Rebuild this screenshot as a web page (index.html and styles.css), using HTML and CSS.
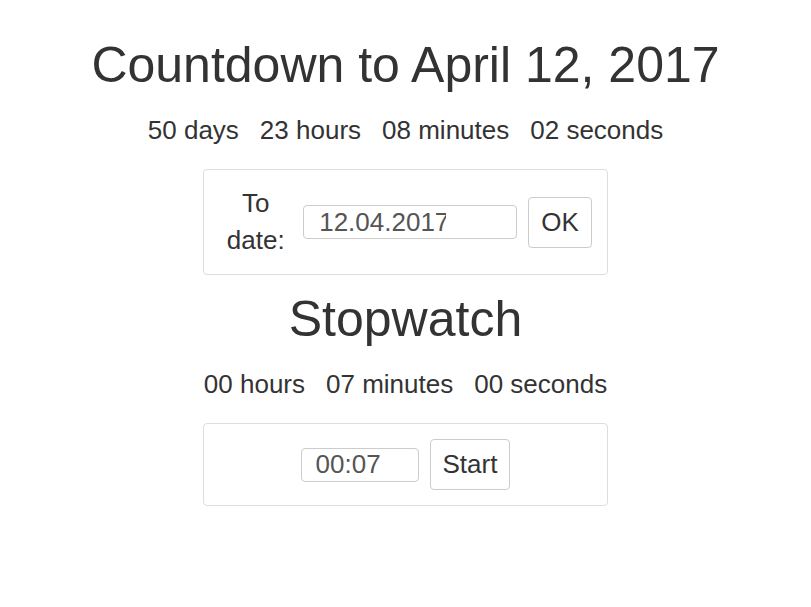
FILE: index.html
```html
<!DOCTYPE html>
<html lang="en">
<head>
<meta charset="utf-8">
<title>Countdown</title>
<link rel="stylesheet" href="styles.css">
</head>
<body>
<main class="page">
  <h1 class="title">Countdown to April 12, 2017</h1>
  <div class="units">
    <span>50 days</span>
    <span>23 hours</span>
    <span>08 minutes</span>
    <span>02 seconds</span>
  </div>
  <form class="panel panel-date">
    <label class="date-label" for="date">To date:</label>
    <input class="field field-date" id="date" type="text" value="12.04.2017">
    <button class="btn" type="button">OK</button>
  </form>

  <h1 class="title title-second">Stopwatch</h1>
  <div class="units">
    <span>00 hours</span>
    <span>07 minutes</span>
    <span>00 seconds</span>
  </div>
  <form class="panel">
    <input class="field field-time" type="text" value="00:07">
    <button class="btn" type="button">Start</button>
  </form>
</main>
</body>
</html>
```

FILE: styles.css
```css
html, body {
  margin: 0;
  padding: 0;
  background: #ffffff;
}

body {
  font-family: "Liberation Sans", Arial, Helvetica, sans-serif;
  color: #333333;
}

.page {
  display: flex;
  flex-direction: column;
  align-items: center;
  padding-top: 38px;
}

.title {
  margin: 0;
  font-size: 50px;
  font-weight: 400;
  line-height: 55px;
  text-align: center;
}

.title-second {
  margin-top: 17px;
}

.units {
  display: flex;
  justify-content: center;
  gap: 21px;
  margin-top: 18px;
  font-size: 26px;
  line-height: 38px;
  white-space: nowrap;
}

.panel {
  box-sizing: border-box;
  width: 405px;
  margin: 20px 0 0;
  padding: 15px;
  border: 1px solid #dddddd;
  border-radius: 4px;
  display: flex;
  align-items: center;
  justify-content: center;
  gap: 11px;
}

.date-label {
  width: 73px;
  font-size: 26px;
  line-height: 37px;
  text-align: center;
}

.field {
  box-sizing: border-box;
  height: 34px;
  margin: 0;
  padding: 0 12px;
  border: 1px solid #cccccc;
  border-radius: 4px;
  font-family: "Liberation Sans", Arial, Helvetica, sans-serif;
  font-size: 26px;
  color: #555555;
  background: #ffffff;
  outline: none;
}

.field-date {
  width: 214px;
  padding-left: 15px;
  padding-right: 70px;
}

.field-time {
  width: 118px;
  padding-left: 14px;
}

.btn {
  box-sizing: border-box;
  height: 51px;
  margin: 0;
  padding: 6px 12px;
  border: 1px solid #cccccc;
  border-radius: 4px;
  background: #ffffff;
  font-family: "Liberation Sans", Arial, Helvetica, sans-serif;
  font-size: 26px;
  line-height: 37px;
  color: #333333;
  cursor: pointer;
}
```
